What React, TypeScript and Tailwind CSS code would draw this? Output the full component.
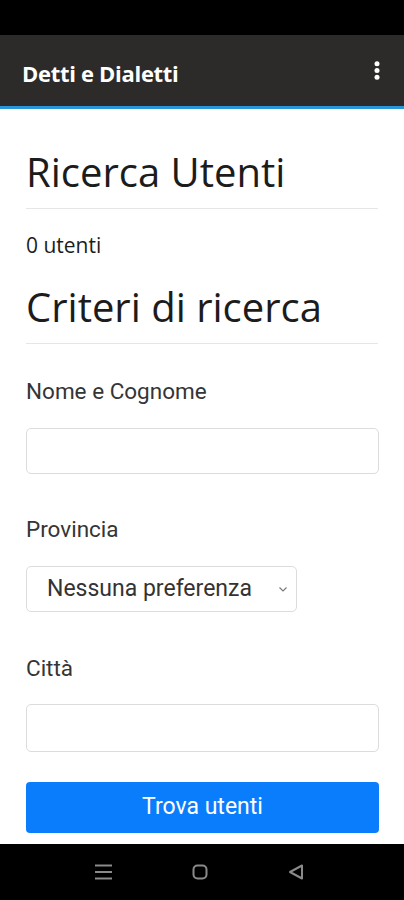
export default function App() {
  return (
    <div className="w-[404px] h-[900px] flex flex-col bg-white overflow-hidden">
      <div className="h-[35px] bg-black shrink-0" />
      <header className="h-[71px] bg-[#2c2b29] flex items-center justify-between pl-[22px] pr-[23px] shrink-0">
        <h1 className="mt-[4px] text-white text-[22px] leading-[30px] font-bold font-['Open_Sans',sans-serif] tracking-[-0.3px]">
          Detti e Dialetti
        </h1>
        <svg width="8" height="19" viewBox="0 0 8 19" fill="#fff">
          <circle cx="4" cy="2.8" r="2.5" />
          <circle cx="4" cy="9.5" r="2.5" />
          <circle cx="4" cy="16.2" r="2.5" />
        </svg>
      </header>
      <div className="h-[3px] bg-[#2a95d8] shrink-0" />

      <main className="flex-1 px-[26px] pt-[37px] font-['Open_Sans',sans-serif] text-[#1c1c1c]">
        <h2 className="text-[40px] leading-[52px] font-normal">Ricerca Utenti</h2>
        <div className="mt-[10px] border-t border-[#e6e6e6]" />
        <p className="mt-[21px] text-[21px] leading-[30px]">0 utenti</p>
        <h2 className="mt-[21px] text-[40px] leading-[52px] font-normal">Criteri di ricerca</h2>
        <div className="mt-[10px] border-t border-[#e6e6e6]" />

        <div className="font-['Roboto',sans-serif] text-[#353535]">
          <label className="block mt-[33px] text-[22.5px] leading-[28px]">Nome e Cognome</label>
          <input className="block mt-[23px] w-[353px] h-[46px] border border-[#dcdcdc] rounded-[5px] outline-none" />

          <label className="block mt-[41px] text-[22.5px] leading-[28px]">Provincia</label>
          <div className="mt-[23px] w-[271px] h-[46px] border border-[#dcdcdc] rounded-[5px] flex items-center justify-between pl-[20px] pr-[9px]">
            <span className="text-[23px] text-[#333]">Nessuna preferenza</span>
            <svg width="8" height="5" viewBox="0 0 8 5" fill="none" stroke="#777" strokeWidth="1.1">
              <path d="M0.5 0.5l3.5 3.5 3.5-3.5" />
            </svg>
          </div>

          <label className="block mt-[42px] text-[22.5px] leading-[28px]">Città</label>
          <input className="block mt-[22px] w-[353px] h-[48px] border border-[#dcdcdc] rounded-[5px] outline-none" />

          <button className="mt-[30px] w-[353px] h-[51px] bg-[#0a7dfd] rounded-[4px] text-white text-[23px]">
            Trova utenti
          </button>
        </div>
      </main>

      <nav className="h-[56px] bg-black shrink-0 flex items-center pl-[95px] gap-[80px]">
        <svg width="17" height="16" viewBox="0 0 17 16" stroke="#8a8a8a" strokeWidth="2.2">
          <path d="M0 1.5h17M0 8h17M0 14.5h17" />
        </svg>
        <svg width="16" height="16" viewBox="0 0 16 16" fill="none" stroke="#8a8a8a" strokeWidth="2">
          <rect x="1.5" y="1.5" width="13" height="13" rx="4" />
        </svg>
        <svg width="16" height="16" viewBox="0 0 16 16" fill="none" stroke="#8a8a8a" strokeWidth="2">
          <path d="M2 8L14 1.5v13z" strokeLinejoin="round" />
        </svg>
      </nav>
    </div>
  );
}
